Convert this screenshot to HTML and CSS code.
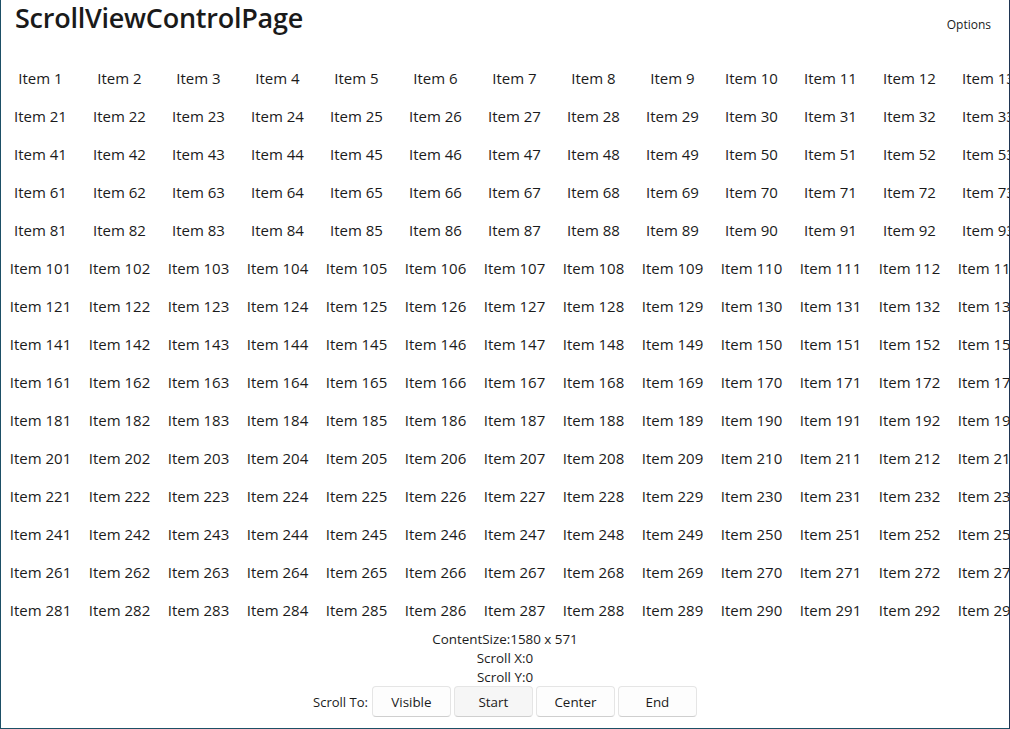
FILE: index.html
```html
<!DOCTYPE html>
<html>
<head>
<meta charset="utf-8">
<link rel="stylesheet" href="styles.css">
</head>
<body>
<div class="frame">
  <header class="header">
    <h1 class="title">ScrollViewControlPage</h1>
    <span class="options">Options</span>
  </header>
  <div class="scroller">
    <div class="grid" id="grid"></div>
  </div>
  <div class="info">
    <div class="line">ContentSize:1580 x 571</div>
    <div class="line">Scroll X:0</div>
    <div class="line">Scroll Y:0</div>
  </div>
  <div class="controls">
    <span class="label">Scroll To:</span>
    <button class="btn">Visible</button>
    <button class="btn btn-hover">Start</button>
    <button class="btn">Center</button>
    <button class="btn">End</button>
  </div>
</div>
<script src="script.js"></script>
</body>
</html>
```
FILE: script.js
```js
var g = document.getElementById('grid');
for (var i = 1; i <= 300; i++) {
  var d = document.createElement('div');
  d.className = 'cell';
  d.textContent = 'Item ' + i;
  g.appendChild(d);
}
```
FILE: styles.css
```css
html, body {
  margin: 0;
  padding: 0;
  background: #ffffff;
}
body {
  font-family: "Open Sans", "Noto Sans", sans-serif;
  color: #1b1b1b;
}
.frame {
  box-sizing: border-box;
  width: 1010px;
  height: 729px;
  border-left: 1px solid #1d4f66;
  border-right: 1px solid #1f3552;
  border-bottom: 1px solid #1d5066;
  display: flex;
  flex-direction: column;
  overflow: hidden;
}
.header {
  height: 59px;
  display: flex;
  justify-content: space-between;
  align-items: flex-start;
  flex: none;
}
.title {
  margin: 0;
  padding: 0 0 0 14px;
  font-size: 27px;
  font-weight: 600;
  line-height: 36px;
  letter-spacing: -0.25px;
  color: #1a1a1a;
}
.options {
  font-size: 12px;
  line-height: 16px;
  margin: 17px 18px 0 0;
  color: #1a1a1a;
}
.scroller {
  height: 571px;
  overflow: hidden;
  flex: none;
}
.grid {
  display: grid;
  grid-template-columns: repeat(20, 79px);
  grid-auto-rows: 38px;
  width: 1580px;
}
.cell {
  display: flex;
  align-items: center;
  justify-content: center;
  font-size: 15px;
  white-space: nowrap;
}
.info {
  text-align: center;
  font-size: 13.4px;
  line-height: 19px;
  flex: none;
}
.controls {
  display: flex;
  justify-content: center;
  align-items: center;
  gap: 3px;
  margin-top: -1px;
  flex: none;
}
.label {
  font-size: 13px;
  margin-right: 1px;
}
.btn {
  box-sizing: border-box;
  width: 79px;
  height: 31px;
  border: 1px solid #e5e5e5;
  border-bottom-color: #cfcfcf;
  border-radius: 4px;
  background: #fdfdfd;
  font-family: "Open Sans", "Noto Sans", sans-serif;
  font-size: 13.4px;
  color: #1b1b1b;
  padding: 0;
}
.btn-hover {
  background: #f6f6f6;
}
```
